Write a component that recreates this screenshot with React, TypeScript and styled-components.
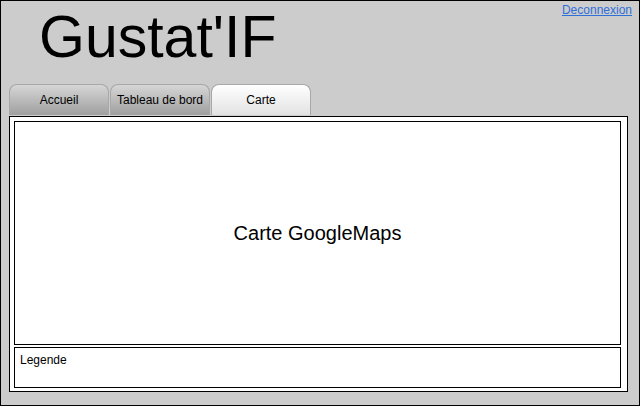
import React from 'react'
import styled, { createGlobalStyle } from 'styled-components'

const GlobalStyle = createGlobalStyle`
  html, body {
    margin: 0;
    padding: 0;
    background: #ffffff;
  }
  body {
    font-family: 'Liberation Sans', Arial, sans-serif;
  }
`

const Page = styled.div`
  box-sizing: border-box;
  width: 640px;
  height: 406px;
  border: 1px solid #000;
  background: #cccccc;
  display: flex;
  flex-direction: column;
`

const Header = styled.header`
  height: 83px;
  display: flex;
  justify-content: space-between;
  align-items: flex-start;
`

const Title = styled.h1`
  margin: 0 0 0 38px;
  font-size: 59px;
  font-weight: normal;
  line-height: 73px;
  color: #000;
`

const Logout = styled.a`
  margin: 2px 7px 0 0;
  font-size: 12px;
  color: #2f6fd8;
  text-decoration: underline;
  cursor: pointer;
`

const TabBar = styled.nav`
  display: flex;
  gap: 2px;
  padding-left: 8px;
  height: 32px;
`

const Tab = styled.div<{ active?: boolean }>`
  box-sizing: border-box;
  width: 100px;
  height: 31px;
  border: 1px solid #a8a8a8;
  border-bottom: none;
  border-radius: 8px 8px 0 0;
  background: ${({ active }) =>
    active
      ? 'linear-gradient(#ffffff, #e2e2e2)'
      : 'linear-gradient(#d6d6d6, #9f9f9f)'};
  display: flex;
  align-items: center;
  justify-content: center;
  font-size: 12px;
  color: #000;

  & + & {
    margin-left: -1px;
  }
`

const Panel = styled.main`
  box-sizing: border-box;
  margin: 0 11px 0 8px;
  height: 276px;
  border: 1px solid #000;
  background: #fff;
  padding: 4px 6px 3px 4px;
  display: flex;
  flex-direction: column;
  gap: 2px;
`

const MapBox = styled.section`
  box-sizing: border-box;
  height: 224px;
  border: 1px solid #000;
  display: flex;
  align-items: center;
  justify-content: center;
  font-size: 20px;
`

const Legend = styled.section`
  box-sizing: border-box;
  height: 41px;
  border: 1px solid #000;
  padding: 5px 5px;
  font-size: 12px;
`

export default function App() {
  return (
    <>
      <GlobalStyle />
      <Page>
        <Header>
          <Title>Gustat'IF</Title>
          <Logout>Deconnexion</Logout>
        </Header>
        <TabBar>
          <Tab>Accueil</Tab>
          <Tab>Tableau de bord</Tab>
          <Tab active>Carte</Tab>
        </TabBar>
        <Panel>
          <MapBox>Carte GoogleMaps</MapBox>
          <Legend>Legende</Legend>
        </Panel>
      </Page>
    </>
  )
}
